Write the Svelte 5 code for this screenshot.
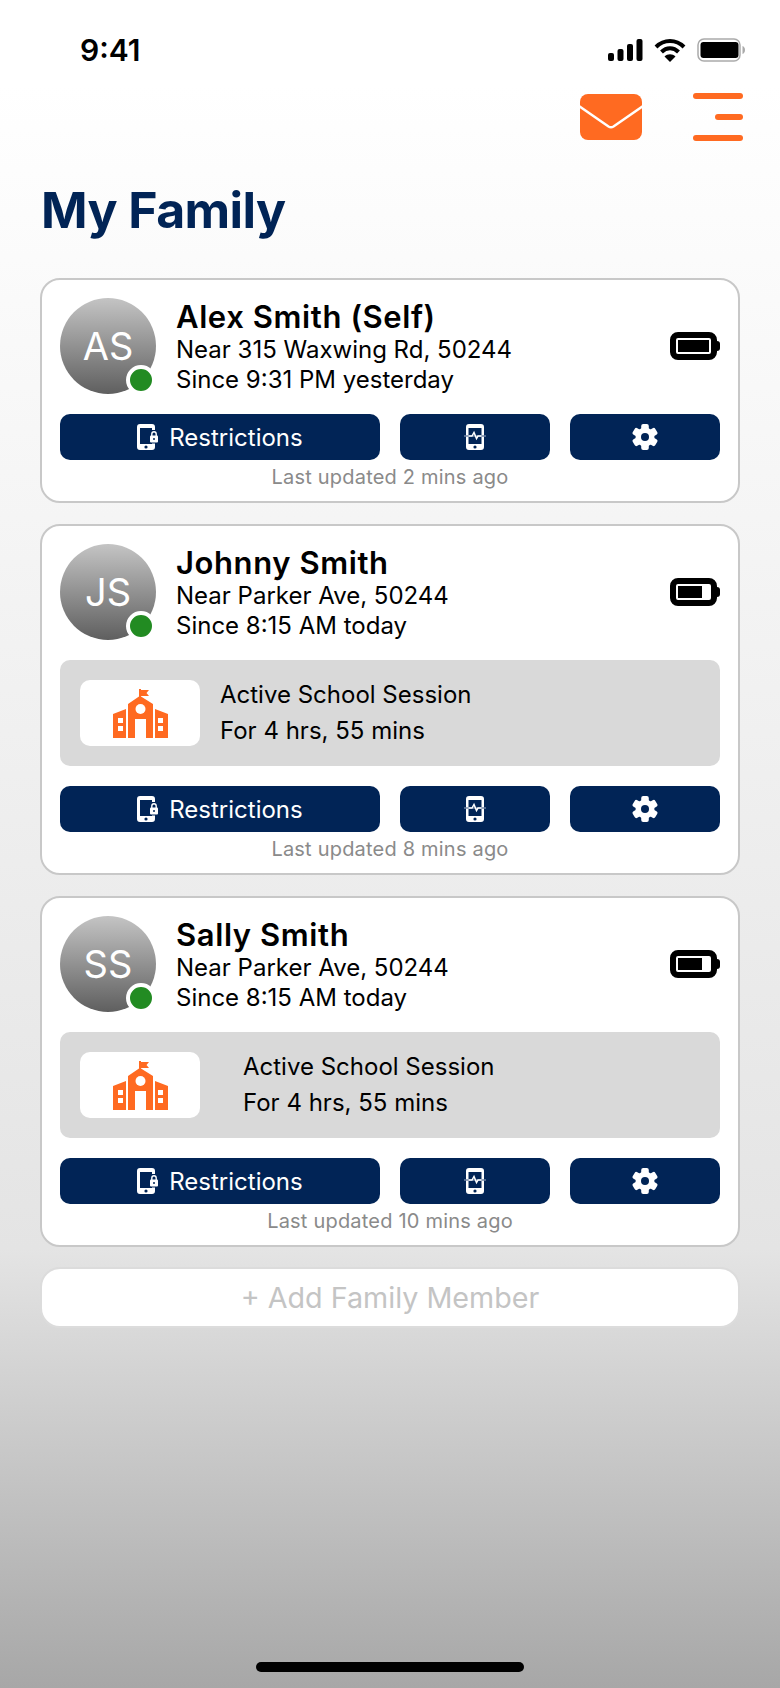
<script>
	const members = [
		{ initials: 'AS', name: 'Alex Smith (Self)', place: 'Near 315 Waxwing Rd, 50244', since: 'Since 9:31 PM yesterday', level: 1, updated: 'Last updated 2 mins ago' },
		{ initials: 'JS', name: 'Johnny Smith', place: 'Near Parker Ave, 50244', since: 'Since 8:15 AM today', level: 0.77, session: 'near', updated: 'Last updated 8 mins ago' },
		{ initials: 'SS', name: 'Sally Smith', place: 'Near Parker Ave, 50244', since: 'Since 8:15 AM today', level: 0.77, session: 'far', updated: 'Last updated 10 mins ago' }
	];
	const teeth = [0, 60, 120, 180, 240, 300];
</script>

<div class="screen">
	<div class="status">
		<span class="clock">9:41</span>
		<div class="status-icons">
			<svg width="35" height="22" viewBox="0 0 35 22" fill="#000">
				<rect x="0" y="14" width="6" height="8" rx="2" />
				<rect x="9.500" y="10" width="6" height="12" rx="2" />
				<rect x="19" y="5" width="6" height="17" rx="2" />
				<rect x="28.500" y="0" width="6" height="22" rx="2" />
			</svg>
			<svg width="32" height="24" viewBox="0 0 32 24" fill="none" stroke="#000" stroke-width="4">
				<path d="M2 9c8-8 20-8 28 0" />
				<path d="M7.500 14c5-5 12-5 17 0" />
				<path d="M16 24l-5.500-5.500c3-3 8-3 11 0z" fill="#000" stroke="none" />
			</svg>
			<svg width="48" height="24" viewBox="0 0 48 24">
				<rect x="1" y="1" width="42" height="22" rx="6" fill="none" stroke="#aaa" stroke-width="1.500" />
				<rect x="3.500" y="4" width="38" height="16" rx="3" fill="#000" />
				<path d="M45.500 8c1.500.5 2.500 2 2.500 4s-1 3.500-2.500 4z" fill="#aaa" />
			</svg>
		</div>
	</div>

	<div class="toolbar">
		<svg width="62" height="46" viewBox="0 0 62 46">
			<rect width="62" height="46" rx="8" fill="#ff6a21" />
			<path d="M-1 12L28.500 32.500q2.500 1.500 5 0L63 12" fill="none" stroke="#fff" stroke-width="2.500" />
		</svg>
		<div class="menu">
			<span class="bar"></span>
			<span class="bar short"></span>
			<span class="bar"></span>
		</div>
	</div>

	<h1>My Family</h1>

	<div class="list">
		{#each members as m}
			<section class="card">
				<div class="top">
					<div class="avatar">
						{m.initials}
						<span class="dot"></span>
					</div>
					<div class="info">
						<div class="name">{m.name}</div>
						<div class="line">{m.place}</div>
						<div class="line">{m.since}</div>
					</div>
					<div class="battery">
						<span class="fill" style:width="{m.level * 100}%"></span>
					</div>
				</div>

				{#if m.session}
					<div class="session" class:far={m.session === 'far'}>
						<div class="school">
							<svg width="55" height="49" viewBox="0 0 55 49" fill="#ff6a21">
								<path d="M26 0h2v1h8l-2.500 3 2.500 3h-8v.5L40 15v34H15V15l11-7.500z" />
								<path d="M0 25l13-5v29H0zM42 20l13 5v24H42z" />
								<circle cx="27.500" cy="20" r="5" fill="#fff" />
								<path d="M22 30h11v19H22zM5 29h5v5H5zM5 37h5v5H5zM45 29h5v5h-5zM45 37h5v5h-5z" fill="#fff" />
							</svg>
						</div>
						<div class="session-text">
							<div>Active School Session</div>
							<div>For 4 hrs, 55 mins</div>
						</div>
					</div>
				{/if}

				<div class="actions">
					<button class="btn">
						<svg width="21" height="26" viewBox="0 0 21 26" fill="#fff">
							<path fill-rule="evenodd" d="M3 0H15Q18 0 18 3V6H15V4H3V20H15V19.500H18V23Q18 26 15 26H3Q0 26 0 23V3Q0 0 3 0ZM9 21.400a1.600 1.600 0 1 0 0 3.200 1.600 1.600 0 0 0 0-3.200Z" />
							<rect x="13" y="11.500" width="8" height="7" rx="1" />
							<path d="M14.800 12v-2a2.200 2.200 0 0 1 4.400 0v2" fill="none" stroke="#fff" stroke-width="1.400" />
							<circle cx="17" cy="15" r="1" fill="#012456" />
						</svg>
						Restrictions
					</button>
					<button class="btn">
						<svg width="22" height="26" viewBox="0 0 22 26" fill="none">
							<path fill-rule="evenodd" d="M5 0h12q3 0 3 3v20q0 3-3 3H5q-3 0-3-3V3q0-3 3-3zM4.500 4v16h13V4zM11 21.400a1.600 1.600 0 1 0 0 3.200 1.600 1.600 0 0 0 0-3.200z" fill="#fff" />
							<path d="M0 12h22" stroke="#6f83a3" stroke-width="1.500" />
							<path d="M4.500 12h3.500l2-3.500 2.500 6 1.500-2.500h3.500" stroke="#fff" stroke-width="1.500" />
						</svg>
					</button>
					<button class="btn">
						<svg width="26" height="26" viewBox="0 0 26 26" fill="#fff">
							<circle cx="13" cy="13" r="9.500" />
							{#each teeth as angle}
								<rect x="9.200" y="0" width="7.600" height="7" rx="2" transform="rotate({angle} 13 13)" />
							{/each}
							<circle cx="13" cy="13" r="4" fill="#012456" />
						</svg>
					</button>
				</div>
				<div class="updated">{m.updated}</div>
			</section>
		{/each}

		<div class="add">+ Add Family Member</div>
	</div>

	<div class="home"></div>
</div>

<style>
	:global(body) {
		margin: 0;
	}

	.screen {
		position: relative;
		box-sizing: border-box;
		width: 780px;
		height: 1688px;
		padding: 0 40px;
		background: linear-gradient(#fff 0%, #fff 5%, #e4e4e4 74%, #a7a7a7 100%);
		font-family: Inter, "Liberation Sans", sans-serif;
		color: #000;
		overflow: hidden;
	}

	.status {
		display: flex;
		align-items: center;
		justify-content: space-between;
		height: 100px;
		padding-left: 40px;
		margin-right: -5px;
	}

	.clock {
		font-size: 30px;
		font-weight: 600;
	}

	.status-icons {
		display: flex;
		align-items: center;
		gap: 11px;
	}

	.toolbar {
		display: flex;
		justify-content: flex-end;
		align-items: flex-start;
		gap: 51px;
		height: 62px;
		margin-top: -7px;
		margin-right: -3px;
	}

	.toolbar svg {
		margin-top: 1px;
	}

	.menu {
		display: flex;
		flex-direction: column;
		align-items: flex-end;
		gap: 15px;
	}

	.bar {
		width: 50px;
		height: 6px;
		border-radius: 3px;
		background: #ff6a21;
	}

	.bar.short {
		width: 28px;
	}

	h1 {
		margin: 25px 0 38px 1px;
		font-size: 50px;
		line-height: 60px;
		font-weight: 700;
		letter-spacing: -0.6px;
		color: #012456;
	}

	.list {
		display: flex;
		flex-direction: column;
		gap: 21px;
	}

	.card {
		box-sizing: border-box;
		padding: 18px 18px 12px;
		background: #fff;
		border: 2px solid #c8c8c8;
		border-radius: 20px;
	}

	.top {
		display: flex;
		align-items: center;
		height: 96px;
	}

	.avatar {
		position: relative;
		display: flex;
		align-items: center;
		justify-content: center;
		flex: none;
		width: 96px;
		height: 96px;
		border-radius: 50%;
		background: linear-gradient(#c4c4c4, #5f5f5f);
		color: #fff;
		font-size: 38px;
	}

	.dot {
		position: absolute;
		right: 0;
		bottom: -1px;
		box-sizing: border-box;
		width: 30px;
		height: 30px;
		border-radius: 50%;
		background: #228b22;
		border: 4px solid #fff;
	}

	.info {
		flex: 1;
		margin-left: 20px;
	}

	.name {
		font-size: 31px;
		font-weight: 600;
		line-height: 37px;
		letter-spacing: 0.6px;
	}

	.line {
		font-size: 24px;
		line-height: 30px;
	}

	.battery {
		position: relative;
		display: flex;
		align-items: center;
		box-sizing: content-box;
		width: 31px;
		height: 12px;
		padding: 2px;
		margin-right: 3px;
		border: 6px solid #000;
		border-radius: 8px;
	}

	.battery::after {
		content: '';
		position: absolute;
		right: -9px;
		top: 3px;
		width: 3px;
		height: 10px;
		background: #000;
		border-radius: 0 3px 3px 0;
	}

	.fill {
		height: 100%;
		background: #000;
	}

	.session {
		display: flex;
		align-items: center;
		gap: 20px;
		margin-top: 20px;
		height: 106px;
		padding: 0 20px;
		background: #d9d9d9;
		border-radius: 10px;
	}

	.session.far {
		gap: 43px;
	}

	.school {
		display: flex;
		align-items: center;
		justify-content: center;
		width: 120px;
		height: 66px;
		background: #fff;
		border-radius: 10px;
	}

	.session-text {
		font-size: 24px;
		line-height: 36px;
	}

	.actions {
		display: grid;
		grid-template-columns: 320px 150px 150px;
		gap: 20px;
		margin-top: 20px;
	}

	.btn {
		display: flex;
		align-items: center;
		justify-content: center;
		gap: 11px;
		height: 46px;
		padding: 0;
		border: none;
		border-radius: 10px;
		background: #012456;
		color: #fff;
		font: inherit;
		font-size: 24px;
	}

	.updated {
		margin-top: 5px;
		text-align: center;
		font-size: 20px;
		line-height: 24px;
		letter-spacing: 0.2px;
		color: #8a8a8a;
	}

	.add {
		display: flex;
		align-items: center;
		justify-content: center;
		box-sizing: border-box;
		height: 61px;
		margin-top: -1px;
		background: #fff;
		border: 2px solid #dcdcdc;
		border-radius: 20px;
		font-size: 28.700px;
		color: #c4c4c4;
	}

	.home {
		position: absolute;
		left: 50%;
		bottom: 16px;
		width: 268px;
		height: 10px;
		margin-left: -134px;
		border-radius: 5px;
		background: #000;
	}
</style>
